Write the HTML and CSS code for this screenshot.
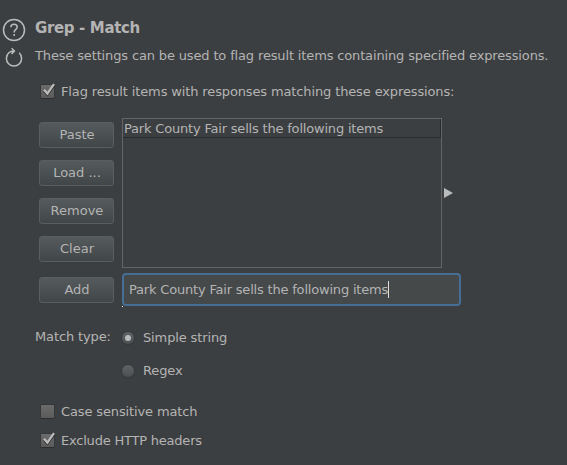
FILE: index.html
```html
<!DOCTYPE html>
<html lang="en">
<head>
<meta charset="utf-8">
<title>Grep - Match</title>
<link rel="stylesheet" href="styles.css">
</head>
<body>
<section class="panel">
  <aside class="tools">
    <svg class="help" width="24" height="24" viewBox="0 0 24 24"><circle cx="12" cy="12" r="10.5"/><path d="M8.8 9.2C8.9 7.3 10.2 6.2 12 6.2s3.2 1.1 3.2 2.9c0 2.3-3 2.6-3 4.7v.7M12.2 16v2"/></svg>
    <svg class="reset" width="20" height="22" viewBox="0 0 20 22"><path d="M15.2 6.8A7.6 7.6 0 1 1 4.8 6.8Q6.8 5 10.2 4.9M7.6 2.2l2.8 2.8-2.8 3"/></svg>
  </aside>
  <main class="content">
    <h1>Grep - Match</h1>
    <p class="description">These settings can be used to flag result items containing specified expressions.</p>
    <div class="option flag">
      <span class="check"><svg width="17" height="17" viewBox="0 0 17 17"><path class="shade" d="M4 9l3.4 3.8L14.4 3.4"/><path d="M4 7.8l3.4 3.8L14 2.2"/></svg></span>
      <span>Flag result items with responses matching these expressions:</span>
    </div>
    <div class="editor">
      <div class="buttons">
        <button>Paste</button>
        <button>Load ...</button>
        <button>Remove</button>
        <button>Clear</button>
      </div>
      <div class="list"><div class="item">Park County Fair sells the following items</div></div>
      <svg class="expand" width="9" height="10" viewBox="0 0 9 10"><path d="M0 0L9 5L0 10z"/></svg>
    </div>
    <div class="add-row">
      <button>Add</button>
      <div class="field"><span>Park County Fair sells the following items</span><i class="caret"></i></div>
    </div>
    <div class="match-type">
      <span class="label">Match type:</span>
      <div class="radios">
        <div class="choice"><span class="radio selected"></span><span>Simple string</span></div>
        <div class="choice"><span class="radio"></span><span>Regex</span></div>
      </div>
    </div>
    <div class="option case"><span class="check"></span><span>Case sensitive match</span></div>
    <div class="option headers">
      <span class="check"><svg width="17" height="17" viewBox="0 0 17 17"><path class="shade" d="M4 9l3.4 3.8L14.4 3.4"/><path d="M4 7.8l3.4 3.8L14 2.2"/></svg></span>
      <span>Exclude HTTP headers</span>
    </div>
  </main>
</section>
</body>
</html>
```
FILE: styles.css
```css
* { box-sizing: border-box; }
body {
  margin: 0;
  height: 465px;
  overflow: hidden;
  background: #3c3f41;
  color: #b4b4b4;
  font: 13px/20px "DejaVu Sans", sans-serif;
  letter-spacing: -0.13px;
  white-space: nowrap;
}
.panel { display: flex; }
.tools {
  display: flex;
  flex-direction: column;
  align-items: center;
  width: 35px;
  padding: 18px 7px 0 0;
}
.tools svg { fill: none; stroke: #bbbbbb; stroke-width: 1.5; }
.help { flex: none; }
.reset { margin-top: 4px; }
.content { flex: 1; padding-top: 18px; }
h1 { margin: 0; font-size: 15px; line-height: 20px; letter-spacing: -0.35px; }
.description { margin: 8px 0 0; letter-spacing: -0.145px; }
.option { display: flex; align-items: center; gap: 6px; padding-left: 5px; height: 20px; }
.flag { margin-top: 16px; }
.check {
  position: relative;
  width: 15px;
  height: 15px;
  margin-bottom: 2px;
  border: 1px solid #353839;
  border-bottom-color: #2b2d2e;
  border-radius: 2px;
  background: linear-gradient(#6b6b6b, #5b5b5b);
}
.check svg { position: absolute; left: -1px; top: -3px; fill: none; stroke: #bbbbbb; stroke-width: 2.3; }
.check .shade { stroke: #2b2b2b; }
.editor { display: flex; margin: 16px 0 0 4px; }
.buttons { display: flex; flex-direction: column; gap: 12px; padding-top: 4px; }
button {
  width: 75px;
  height: 26px;
  padding: 0;
  border: 1px solid #5a5e5f;
  border-radius: 3px;
  background: linear-gradient(#555a5c, #414648);
  color: inherit;
  font: inherit;
  text-indent: 1px;
}
.list { width: 320px; height: 150px; margin-left: 8px; border: 1px solid #646464; }
.item {
  height: 19px;
  padding-left: 1px;
  border: solid #292b2d;
  border-width: 0 1px 1px 0;
  line-height: 19px;
  letter-spacing: -0.19px;
}
.expand { margin: 70px 0 0 2px; fill: #bbbbbb; }
.add-row { display: flex; align-items: flex-start; margin: 5px 0 0 4px; }
.add-row button { margin-top: 4px; }
.field {
  position: relative;
  display: flex;
  align-items: center;
  width: 339px;
  height: 33px;
  margin-left: 8px;
  padding-left: 5px;
  border: 2px solid #466d94;
  border-radius: 4px;
  background: #45494a;
  letter-spacing: -0.19px;
}
.field::after {
  content: "";
  position: absolute;
  left: -2px;
  bottom: -3px;
  width: 1px;
  height: 1px;
  background: #ffffff;
}
.caret { width: 1px; height: 17px; background: #dddddd; }
.match-type { display: flex; margin-top: 21px; }
.label { width: 86px; }
.radios { padding-top: 1px; }
.choice { display: flex; align-items: center; gap: 8px; height: 20px; }
.choice + .choice { margin-top: 13px; }
.radio {
  display: grid;
  place-items: center;
  width: 14px;
  height: 14px;
  border: 1px solid #35383a;
  border-radius: 50%;
  background: linear-gradient(#5f6364, #4c5052);
}
.selected::after { content: ""; width: 6px; height: 6px; border-radius: 50%; background: #bbbbbb; }
.case { margin-top: 21px; }
.headers { margin-top: 9px; letter-spacing: -0.21px; }
```
